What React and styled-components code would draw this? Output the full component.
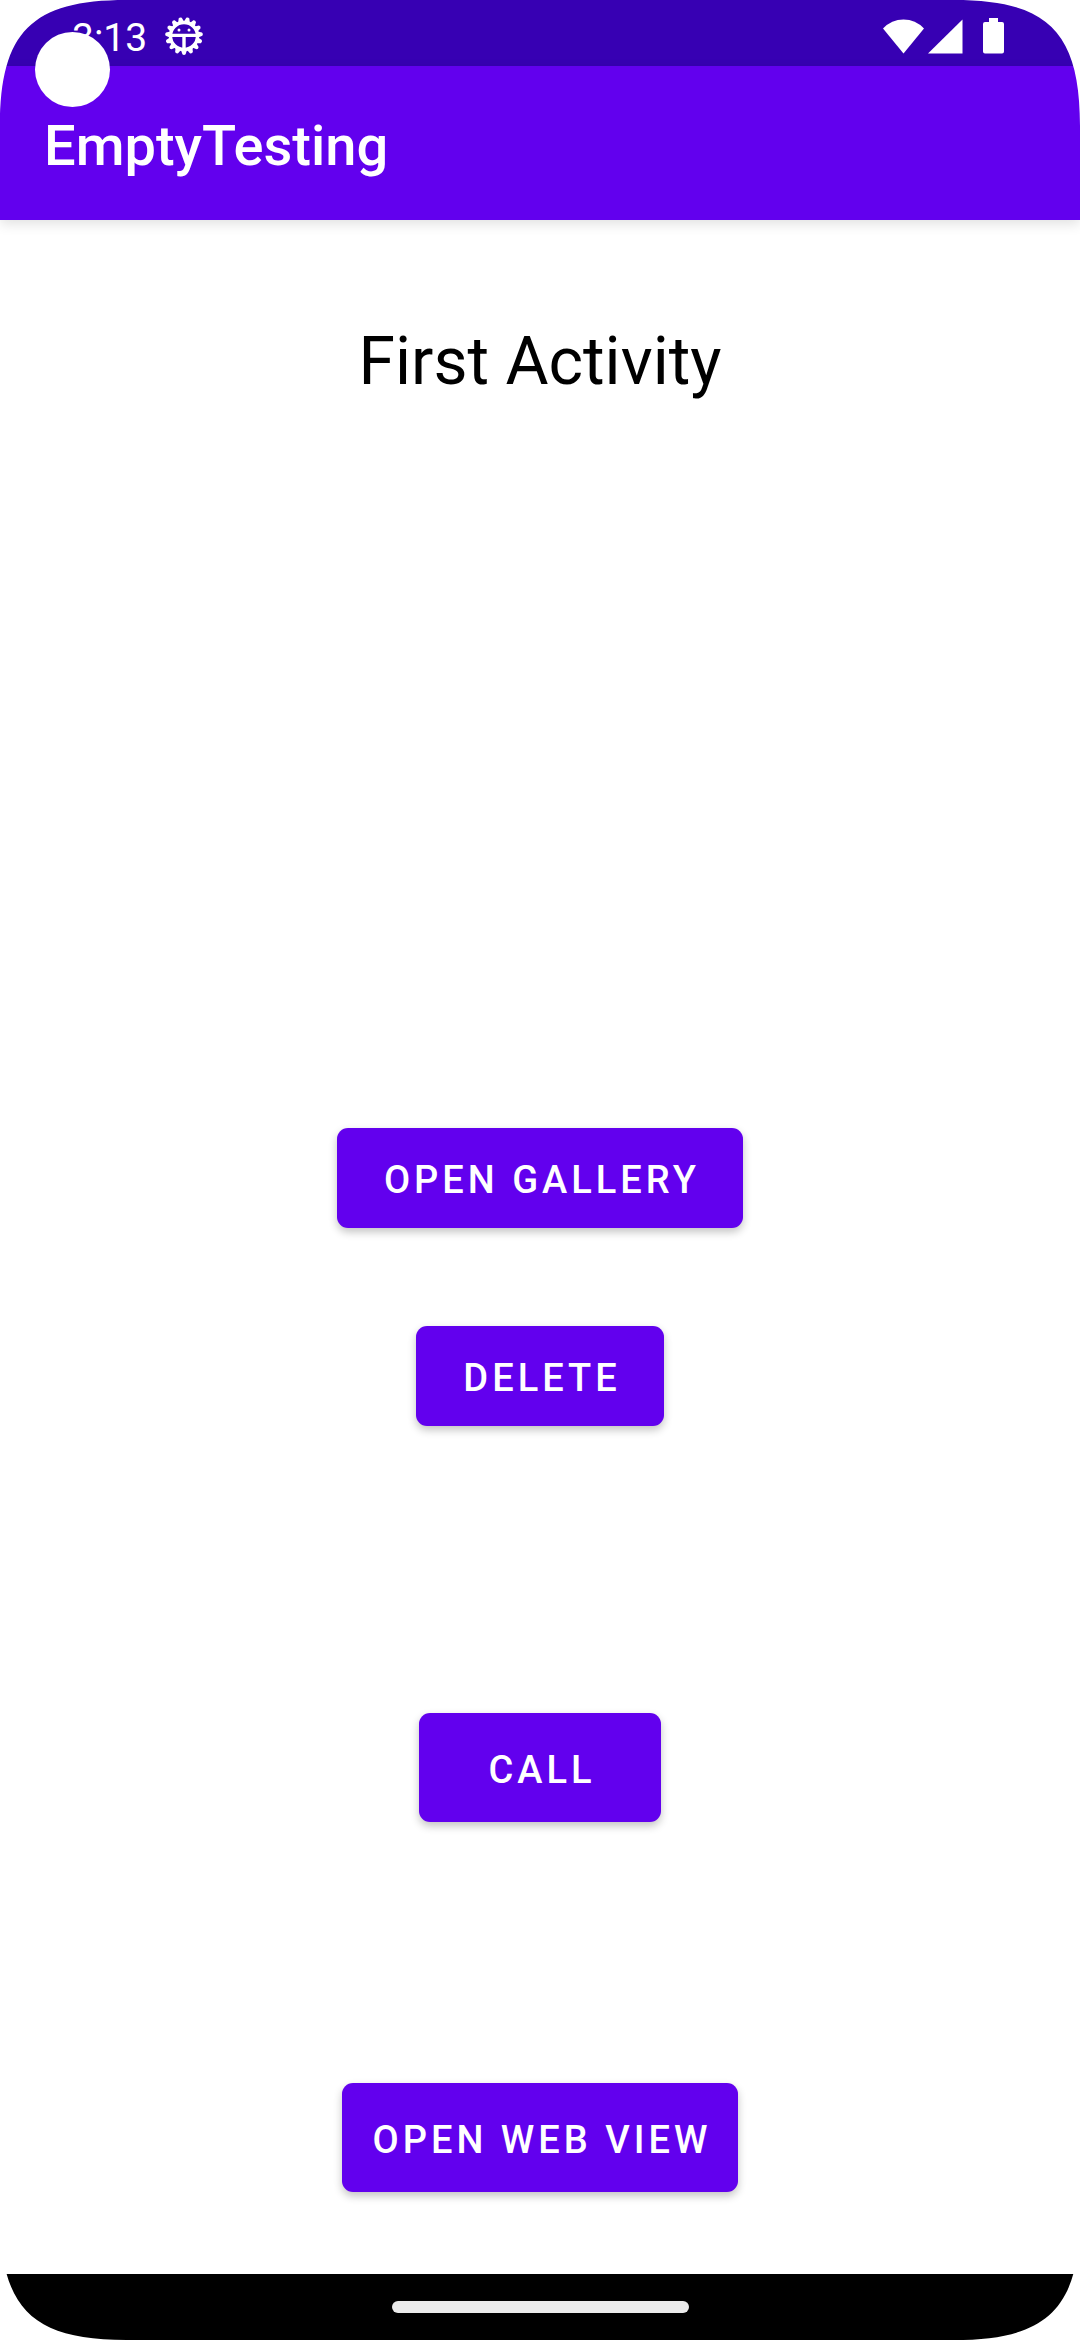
import React from "react";
import styled, { createGlobalStyle } from "styled-components";

const GlobalStyle = createGlobalStyle`
  * { box-sizing: border-box; }
  body {
    margin: 0;
    background: #fff;
    color: #000;
    font-family: Roboto, "Liberation Sans", sans-serif;
  }
`;

const Screen = styled.div`
  position: relative;
  display: flex;
  flex-direction: column;
  min-height: 100vh;
  overflow: hidden;
`;

const StatusBar = styled.div`
  display: flex;
  align-items: center;
  justify-content: space-between;
  height: 66px;
  padding: 6px 76px 0 72px;
  background: #3700b3;
  color: #fff;
`;

const StatusGroup = styled.div`
  display: flex;
  align-items: center;
  gap: ${({ $gap }) => $gap}px;
`;

const Clock = styled.time`
  padding-top: 4px;
  font-size: 39px;
  line-height: 46px;
`;

const Icon = styled.svg`
  display: block;
  fill: #fff;
`;

const AppBar = styled.header`
  display: flex;
  align-items: center;
  height: 154px;
  padding: 6px 44px 0;
  background: #6200ee;
  color: #fff;
  box-shadow: 0 4px 12px rgba(0, 0, 0, 0.12);
`;

const AppTitle = styled.h1`
  margin: 0;
  font-size: 56px;
  font-weight: 500;
  line-height: 64px;
`;

const Content = styled.main`
  flex: 1;
  display: flex;
  flex-direction: column;
  align-items: center;
  padding: 103px 32px 82px;
`;

const Heading = styled.h2`
  margin: 0;
  font-size: 66px;
  font-weight: 400;
  line-height: 78px;
`;

const ButtonGroup = styled.div`
  display: flex;
  flex-direction: column;
  align-items: center;
  gap: 98px;
  margin-top: ${({ $space }) => $space}px;
`;

const ActionButton = styled.button`
  min-width: 242px;
  height: ${({ $tall }) => ($tall ? 109 : 100)}px;
  padding: ${({ $compact }) => ($compact ? "4px 27px 0 31px" : "4px 43px 0 47px")};
  border: 0;
  border-radius: 11px;
  background: #6200ee;
  color: #fff;
  font-family: inherit;
  font-size: 38px;
  font-weight: 500;
  line-height: 46px;
  letter-spacing: 4px;
  text-transform: uppercase;
  white-space: nowrap;
  box-shadow: 0 4px 8px rgba(0, 0, 0, 0.24);
  cursor: pointer;
`;

const NavigationBar = styled.footer`
  display: flex;
  align-items: center;
  justify-content: center;
  height: 66px;
  background: #000;
`;

const HomeHandle = styled.span`
  width: 297px;
  height: 12px;
  border-radius: 6px;
  background: #ebebeb;
`;

const CameraCutout = styled.span`
  position: absolute;
  top: 32px;
  left: 35px;
  width: 75px;
  height: 75px;
  border-radius: 50%;
  background: #fff;
`;

const CornerShape = styled.svg`
  position: absolute;
  ${({ $bottom }) => ($bottom ? "bottom: 0;" : "top: 0;")}
  ${({ $right }) => ($right ? "right: 0;" : "left: 0;")}
  transform: scale(${({ $right }) => ($right ? -1 : 1)}, ${({ $bottom }) => ($bottom ? -1 : 1)});
  fill: #fff;
  pointer-events: none;
`;

function Corner({ bottom, right }) {
  return (
    <CornerShape $bottom={bottom} $right={right} width="130" height="130" viewBox="0 0 130 130" aria-hidden="true">
      <path d="M0 0H126C32 0 0 32 0 126Z" />
    </CornerShape>
  );
}

const TEETH = Array.from({ length: 15 }, (_, i) => 180 + i * 24);

function DebugIcon() {
  return (
    <Icon width="38" height="38" viewBox="-19 -19 38 38" aria-hidden="true">
      {TEETH.map((angle) => (
        <path key={angle} d="M-3 -14L-1.6 -18.2Q0 -19.6 1.6 -18.2L3 -14Z" transform={`rotate(${angle})`} />
      ))}
      <circle r="13.5" fill="none" stroke="#fff" strokeWidth="3.4" />
      <path d="M-13 -2.2H13V1H1.7V14H-1.7V1H-13Z" />
      <circle cx="-5" cy="-6" r="1.5" />
      <circle cx="5" cy="-6" r="1.5" />
    </Icon>
  );
}

function WifiIcon() {
  return (
    <Icon width="41" height="35" viewBox="0 0 41 35" aria-hidden="true">
      <path d="M20.500 34.500L0 9.500Q8.500 0.500 20.500 0.500T41 9.500Z" />
    </Icon>
  );
}

function SignalIcon() {
  return (
    <Icon width="35" height="35" viewBox="0 0 35 35" aria-hidden="true">
      <path d="M0 34.500L34.500 0.500V34.500Z" />
    </Icon>
  );
}

function BatteryIcon() {
  return (
    <Icon width="21" height="36" viewBox="0 0 21 36" aria-hidden="true">
      <path d="M6 0H15V4H19Q21 4 21 6V33.500Q21 35.500 19 35.500H2Q0 35.500 0 33.500V6Q0 4 2 4H6Z" />
    </Icon>
  );
}

export default function App() {
  return (
    <Screen>
      <GlobalStyle />
      <StatusBar>
        <StatusGroup $gap={18}>
          <Clock>3:13</Clock>
          <DebugIcon />
        </StatusGroup>
        <StatusGroup $gap={20}>
          <StatusGroup $gap={4}>
            <WifiIcon />
            <SignalIcon />
          </StatusGroup>
          <BatteryIcon />
        </StatusGroup>
      </StatusBar>
      <AppBar>
        <AppTitle>EmptyTesting</AppTitle>
      </AppBar>
      <Content>
        <Heading>First Activity</Heading>
        <ButtonGroup $space={727}>
          <ActionButton type="button">Open Gallery</ActionButton>
          <ActionButton type="button">Delete</ActionButton>
        </ButtonGroup>
        <ButtonGroup $space={287}>
          <ActionButton type="button" $tall>Call</ActionButton>
        </ButtonGroup>
        <ButtonGroup $space={261}>
          <ActionButton type="button" $tall $compact>Open Web View</ActionButton>
        </ButtonGroup>
      </Content>
      <NavigationBar>
        <HomeHandle />
      </NavigationBar>
      <CameraCutout />
      <Corner />
      <Corner right />
      <Corner bottom />
      <Corner bottom right />
    </Screen>
  );
}
